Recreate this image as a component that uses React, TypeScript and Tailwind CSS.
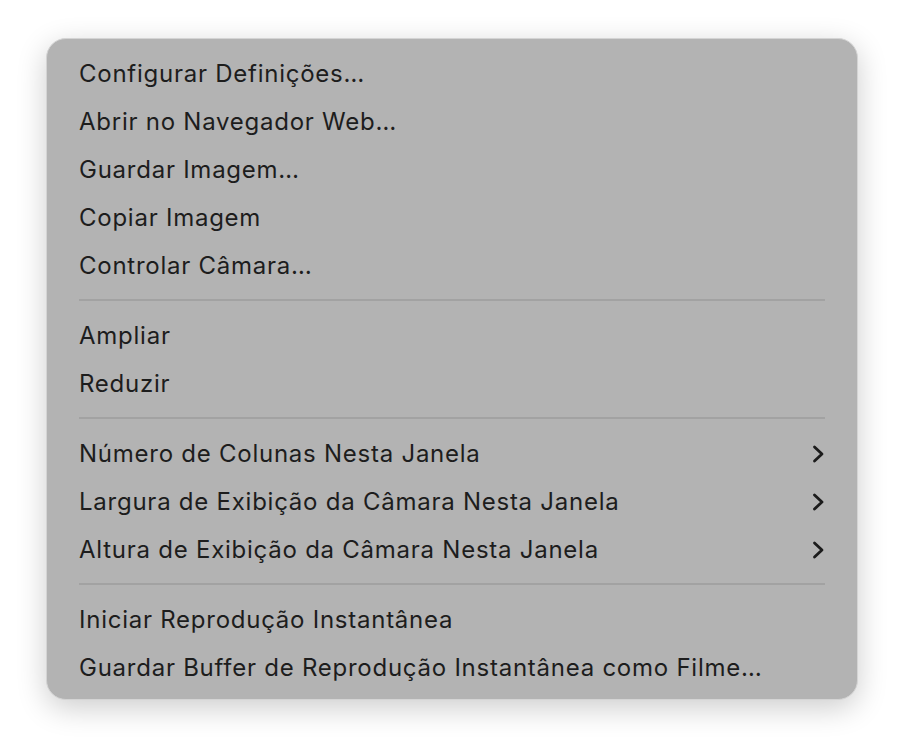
const GROUPS: { label: string; submenu?: boolean }[][] = [
  [
    { label: "Configurar Definições…" },
    { label: "Abrir no Navegador Web…" },
    { label: "Guardar Imagem…" },
    { label: "Copiar Imagem" },
    { label: "Controlar Câmara…" },
  ],
  [{ label: "Ampliar" }, { label: "Reduzir" }],
  [
    { label: "Número de Colunas Nesta Janela", submenu: true },
    { label: "Largura de Exibição da Câmara Nesta Janela", submenu: true },
    { label: "Altura de Exibição da Câmara Nesta Janela", submenu: true },
  ],
  [
    { label: "Iniciar Reprodução Instantânea" },
    { label: "Guardar Buffer de Reprodução Instantânea como Filme…" },
  ],
];

function Chevron() {
  return (
    <svg width="14" height="18" viewBox="0 0 14 18" fill="none">
      <path
        d="M3.5 2 L11 9 L3.5 16"
        stroke="#1c1c1c"
        strokeWidth="2.8"
        strokeLinecap="round"
        strokeLinejoin="round"
      />
    </svg>
  );
}

export default function App() {
  return (
    <div className="min-h-screen bg-white pl-[46px] pt-[38px] font-['Inter',_'Noto_Sans',_sans-serif]">
      <div className="w-[812px] rounded-[20px] border border-[#d4d4d4] bg-[#b3b3b3] pb-[7px] pt-[11px] shadow-[0_8px_30px_rgba(0,0,0,0.2)]">
        {GROUPS.map((group, gi) => (
          <div key={gi}>
            {gi > 0 && <div className="mx-[32px] mb-[11px] mt-[9px] h-[2px] bg-[#a2a2a2]" />}
            {group.map((item) => (
              <div
                key={item.label}
                className="flex h-[48px] items-center justify-between pl-[32px] pr-[32px] text-[24px] tracking-[0.75px] text-[#1d1d1d]"
              >
                <span>{item.label}</span>
                {item.submenu && <Chevron />}
              </div>
            ))}
          </div>
        ))}
      </div>
    </div>
  );
}
